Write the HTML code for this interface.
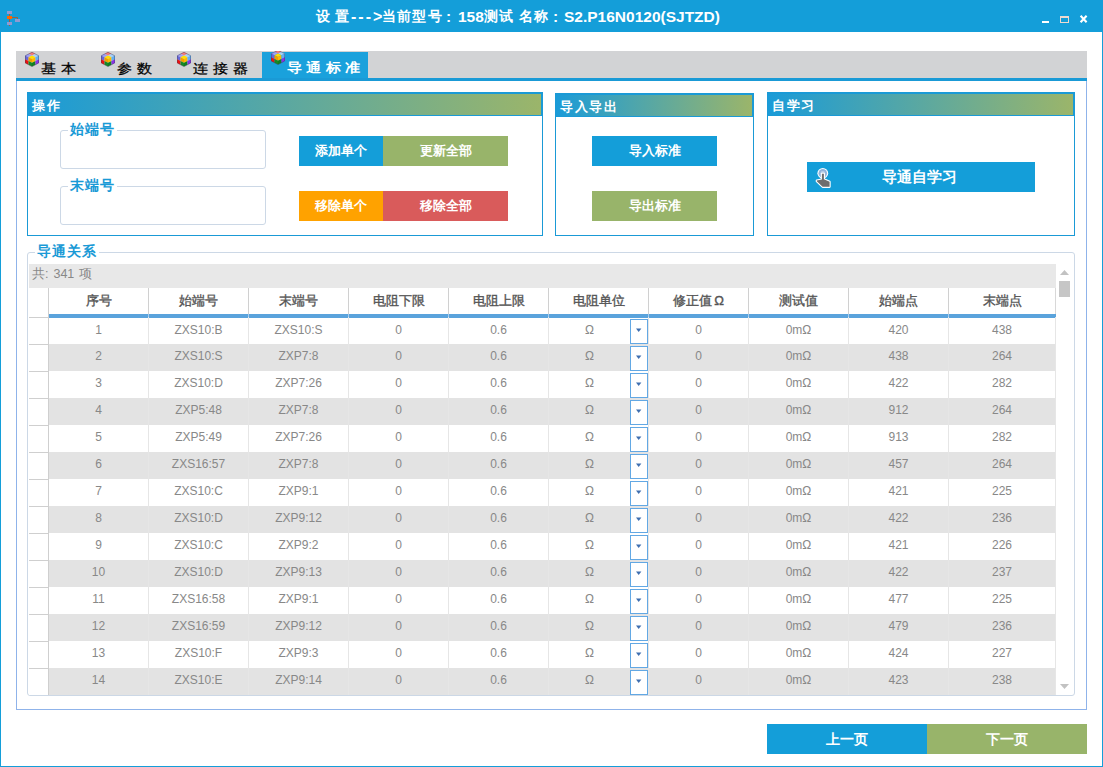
<!DOCTYPE html>
<html><head><meta charset="utf-8">
<style>
*{box-sizing:border-box;margin:0;padding:0}
html,body{width:1103px;height:767px;overflow:hidden;background:#fff;font-family:"Liberation Sans",sans-serif}
.abs{position:absolute}
#win{position:absolute;left:0;top:0;width:1103px;height:767px;border:1px solid #149ed9;border-top:none;background:#fff}
#title{position:absolute;left:0;top:0;width:1103px;height:32px;background:#149ed9}
.tt{position:absolute;color:#fff;font-weight:bold;white-space:nowrap}
.tt.c{font-size:13.5px;top:8px}
.tt.l{font-size:15.5px;top:8px}
#ttext{position:absolute;left:316px;top:7px;color:#fff;font-weight:bold;font-size:15px;white-space:nowrap;letter-spacing:0}
#frame{position:absolute;left:16px;top:78px;width:1071px;height:632px;border:1px solid #8fb3ea;border-top:none}
#tabbar{position:absolute;left:16px;top:51px;width:1071px;height:27px;background:#d2d3d5}
#tabline{position:absolute;left:16px;top:78px;width:1071px;height:3px;background:#1a9ad6}
.tab{position:absolute;top:51px;height:27px;font-size:15px;color:#000;white-space:nowrap;letter-spacing:3.8px;font-weight:500;font-size:15.5px;-webkit-text-stroke:0.3px #000}
.tab.on{background:#1aa1dc;color:#fff;font-weight:bold;-webkit-text-stroke:0}
.tab span{position:absolute;top:8.5px;transform:scaleY(0.86);transform-origin:top left}
.group{position:absolute;border:1px solid #1a9ad6;background:#fff}
.ghead{position:absolute;left:0;top:0;right:0;height:23px;background:linear-gradient(to right,#1a9bd8,#9bb56a);border-top:1px solid #1a9ad6;border-right:1px solid #1a9ad6;border-bottom:1px solid #1a9ad6;color:#fff;font-weight:bold;font-size:13px;letter-spacing:1.6px;padding-left:4px;line-height:24px}
.btn{position:absolute;color:#fff;font-weight:bold;font-size:13px;text-align:center;line-height:30px;white-space:nowrap}
.fs{position:absolute;border:1px solid #ccd8e6;border-radius:3px}
.legend{position:absolute;background:#fff;color:#1a9ad6;font-size:14px;font-weight:bold;letter-spacing:1px;padding:0 2px;white-space:nowrap}
#tbl{position:absolute;left:29px;top:288px}
.hdr{position:absolute;top:288px;height:26px;color:#555;font-weight:500;-webkit-text-stroke:0.35px #555;font-size:13px;text-align:center;line-height:26px}
.row{position:absolute;left:49px;width:1007px;height:27px}
.dd{position:absolute;width:18px;height:25px;border:1px solid #62a8e4;background:#fff}
.dd i{position:absolute;left:5.5px;top:9.5px;width:0;height:0;border-left:2.5px solid transparent;border-right:2.5px solid transparent;border-top:3.5px solid #3f6fb0}
.cell{position:absolute;top:-1px;height:28px;color:#888;font-size:12px;text-align:center;line-height:27px;border-right:1px solid #e6e6e6}
</style></head><body>
<div id="win">
  <div id="title"></div>
</div>
<div class="tt c" style="left:316px">设</div>
<div class="tt c" style="left:335px">置</div>
<div class="tt l" style="left:351px;letter-spacing:2px;font-size:16px;top:8px">---&gt;</div>
<div class="tt c" style="left:382px;letter-spacing:1.2px">当前型号</div>
<div class="tt l" style="left:446px">:</div>
<div class="tt l" style="left:458px">158</div>
<div class="tt c" style="left:484px;letter-spacing:1.2px">测试</div>
<div class="tt c" style="left:519px;letter-spacing:1.2px">名称</div>
<div class="tt l" style="left:553px">:</div>
<div class="tt l" style="left:564px">S2.P16N0120(SJTZD)</div>
<div id="frame"></div>
<div id="tabbar"></div>
<div id="tabline"></div>
<div class="tab" style="left:16px;width:86px"><span style="left:25px">基本</span></div>
<div class="tab" style="left:102px;width:76px"><span style="left:15px">参数</span></div>
<div class="tab" style="left:178px;width:84px"><span style="left:15px">连接器</span></div>
<div class="tab on" style="left:262px;width:106px;top:52px;height:26px;letter-spacing:3.3px"><span style="left:25px;top:6.5px">导通标准</span></div>

<div class="group" style="left:27px;top:92px;width:516px;height:144px"><div class="ghead">操作</div></div>
<div class="group" style="left:555px;top:93px;width:199px;height:143px"><div class="ghead">导入导出</div></div>
<div class="group" style="left:767px;top:92px;width:308px;height:144px"><div class="ghead">自学习</div></div>

<div class="fs" style="left:60px;top:130px;width:206px;height:39px"></div>
<div class="legend" style="left:68px;top:121px">始端号</div>
<div class="fs" style="left:60px;top:186px;width:206px;height:39px"></div>
<div class="legend" style="left:68px;top:177px">末端号</div>

<div class="btn" style="left:299px;top:136px;width:84px;height:30px;background:#149ed9">添加单个</div>
<div class="btn" style="left:383px;top:136px;width:125px;height:30px;background:#98b46a">更新全部</div>
<div class="btn" style="left:299px;top:191px;width:84px;height:30px;background:#ffa200">移除单个</div>
<div class="btn" style="left:383px;top:191px;width:125px;height:30px;background:#d95b5b">移除全部</div>
<div class="btn" style="left:592px;top:136px;width:125px;height:30px;background:#149ed9">导入标准</div>
<div class="btn" style="left:592px;top:191px;width:125px;height:30px;background:#98b46a">导出标准</div>
<div class="btn" style="left:807px;top:162px;width:228px;height:30px;background:#149ed9;font-size:15px;text-indent:-3px">导通自学习</div>

<div class="fs" style="left:27px;top:252px;width:1048px;height:444px"></div>
<div class="legend" style="left:35px;top:243px">导通关系</div>
<div class="abs" style="left:29px;top:264px;width:1027px;height:24px;background:#e8e8e8;color:#888;font-size:12.5px;line-height:21.5px;padding-left:3px;word-spacing:1.5px">共: 341 项</div>

<!-- TABLE -->
<div class="abs" style="left:29px;top:288px;width:19px;height:407px;background:#fff"></div>
<div class="abs" style="left:48px;top:288px;width:1px;height:407px;background:#cfcfcf"></div>
<div class="hdr" style="left:49px;width:99px">序号</div>
<div class="abs" style="left:148px;top:288px;width:1px;height:26px;background:#d0d0d0"></div>
<div class="hdr" style="left:149px;width:99px">始端号</div>
<div class="abs" style="left:248px;top:288px;width:1px;height:26px;background:#d0d0d0"></div>
<div class="hdr" style="left:249px;width:99px">末端号</div>
<div class="abs" style="left:348px;top:288px;width:1px;height:26px;background:#d0d0d0"></div>
<div class="hdr" style="left:349px;width:99px">电阻下限</div>
<div class="abs" style="left:448px;top:288px;width:1px;height:26px;background:#d0d0d0"></div>
<div class="hdr" style="left:449px;width:99px">电阻上限</div>
<div class="abs" style="left:548px;top:288px;width:1px;height:26px;background:#d0d0d0"></div>
<div class="hdr" style="left:549px;width:99px">电阻单位</div>
<div class="abs" style="left:648px;top:288px;width:1px;height:26px;background:#d0d0d0"></div>
<div class="hdr" style="left:649px;width:99px">修正值<span style="margin-left:2px">Ω</span></div>
<div class="abs" style="left:748px;top:288px;width:1px;height:26px;background:#d0d0d0"></div>
<div class="hdr" style="left:749px;width:99px">测试值</div>
<div class="abs" style="left:848px;top:288px;width:1px;height:26px;background:#d0d0d0"></div>
<div class="hdr" style="left:849px;width:99px">始端点</div>
<div class="abs" style="left:948px;top:288px;width:1px;height:26px;background:#d0d0d0"></div>
<div class="hdr" style="left:949px;width:107px">末端点</div>
<div class="abs" style="left:1055px;top:288px;width:1px;height:26px;background:#d8d8d8"></div>
<div class="abs" style="left:49px;top:314px;width:1007px;height:4px;background:#5aa3dc"></div>
<div id="notches"><div class="abs" style="left:148px;top:314px;width:1px;height:4px;background:#a8cdec"></div><div class="abs" style="left:248px;top:314px;width:1px;height:4px;background:#a8cdec"></div><div class="abs" style="left:348px;top:314px;width:1px;height:4px;background:#a8cdec"></div><div class="abs" style="left:448px;top:314px;width:1px;height:4px;background:#a8cdec"></div><div class="abs" style="left:548px;top:314px;width:1px;height:4px;background:#a8cdec"></div><div class="abs" style="left:648px;top:314px;width:1px;height:4px;background:#a8cdec"></div><div class="abs" style="left:748px;top:314px;width:1px;height:4px;background:#a8cdec"></div><div class="abs" style="left:848px;top:314px;width:1px;height:4px;background:#a8cdec"></div><div class="abs" style="left:948px;top:314px;width:1px;height:4px;background:#a8cdec"></div></div>
<div class="row" style="top:318px;height:26px;background:#fff">
<div class="cell" style="left:0px;width:100px;line-height:26px">1</div>
<div class="cell" style="left:100px;width:100px;line-height:26px">ZXS10:B</div>
<div class="cell" style="left:200px;width:100px;line-height:26px">ZXS10:S</div>
<div class="cell" style="left:300px;width:100px;line-height:26px">0</div>
<div class="cell" style="left:400px;width:100px;line-height:26px">0.6</div>
<div class="cell" style="left:500px;width:100px;line-height:26px"><span style="margin-left:-18px">Ω</span></div>
<div class="dd" style="left:581px;top:1px"><svg style="position:absolute;left:-1px;top:-1px" width="18" height="25"><polygon points="6,9.6 11.4,9.6 8.7,13" fill="#3f6fb0"/></svg></div>
<div class="cell" style="left:600px;width:100px;line-height:26px">0</div>
<div class="cell" style="left:700px;width:100px;line-height:26px">0mΩ</div>
<div class="cell" style="left:800px;width:100px;line-height:26px">420</div>
<div class="cell" style="left:900px;width:107px;line-height:26px">438</div>
</div>
<div class="abs" style="left:29px;top:317px;width:19px;height:1px;background:#cfcfcf"></div>
<div class="row" style="top:344px;height:27px;background:#e3e3e3">
<div class="cell" style="left:0px;width:100px;line-height:27px">2</div>
<div class="cell" style="left:100px;width:100px;line-height:27px">ZXS10:S</div>
<div class="cell" style="left:200px;width:100px;line-height:27px">ZXP7:8</div>
<div class="cell" style="left:300px;width:100px;line-height:27px">0</div>
<div class="cell" style="left:400px;width:100px;line-height:27px">0.6</div>
<div class="cell" style="left:500px;width:100px;line-height:27px"><span style="margin-left:-18px">Ω</span></div>
<div class="dd" style="left:581px;top:2px"><svg style="position:absolute;left:-1px;top:-1px" width="18" height="25"><polygon points="6,9.6 11.4,9.6 8.7,13" fill="#3f6fb0"/></svg></div>
<div class="cell" style="left:600px;width:100px;line-height:27px">0</div>
<div class="cell" style="left:700px;width:100px;line-height:27px">0mΩ</div>
<div class="cell" style="left:800px;width:100px;line-height:27px">438</div>
<div class="cell" style="left:900px;width:107px;line-height:27px">264</div>
</div>
<div class="abs" style="left:29px;top:344px;width:19px;height:1px;background:#cfcfcf"></div>
<div class="row" style="top:371px;height:27px;background:#fff">
<div class="cell" style="left:0px;width:100px;line-height:27px">3</div>
<div class="cell" style="left:100px;width:100px;line-height:27px">ZXS10:D</div>
<div class="cell" style="left:200px;width:100px;line-height:27px">ZXP7:26</div>
<div class="cell" style="left:300px;width:100px;line-height:27px">0</div>
<div class="cell" style="left:400px;width:100px;line-height:27px">0.6</div>
<div class="cell" style="left:500px;width:100px;line-height:27px"><span style="margin-left:-18px">Ω</span></div>
<div class="dd" style="left:581px;top:2px"><svg style="position:absolute;left:-1px;top:-1px" width="18" height="25"><polygon points="6,9.6 11.4,9.6 8.7,13" fill="#3f6fb0"/></svg></div>
<div class="cell" style="left:600px;width:100px;line-height:27px">0</div>
<div class="cell" style="left:700px;width:100px;line-height:27px">0mΩ</div>
<div class="cell" style="left:800px;width:100px;line-height:27px">422</div>
<div class="cell" style="left:900px;width:107px;line-height:27px">282</div>
</div>
<div class="abs" style="left:29px;top:371px;width:19px;height:1px;background:#cfcfcf"></div>
<div class="row" style="top:398px;height:27px;background:#e3e3e3">
<div class="cell" style="left:0px;width:100px;line-height:27px">4</div>
<div class="cell" style="left:100px;width:100px;line-height:27px">ZXP5:48</div>
<div class="cell" style="left:200px;width:100px;line-height:27px">ZXP7:8</div>
<div class="cell" style="left:300px;width:100px;line-height:27px">0</div>
<div class="cell" style="left:400px;width:100px;line-height:27px">0.6</div>
<div class="cell" style="left:500px;width:100px;line-height:27px"><span style="margin-left:-18px">Ω</span></div>
<div class="dd" style="left:581px;top:2px"><svg style="position:absolute;left:-1px;top:-1px" width="18" height="25"><polygon points="6,9.6 11.4,9.6 8.7,13" fill="#3f6fb0"/></svg></div>
<div class="cell" style="left:600px;width:100px;line-height:27px">0</div>
<div class="cell" style="left:700px;width:100px;line-height:27px">0mΩ</div>
<div class="cell" style="left:800px;width:100px;line-height:27px">912</div>
<div class="cell" style="left:900px;width:107px;line-height:27px">264</div>
</div>
<div class="abs" style="left:29px;top:398px;width:19px;height:1px;background:#cfcfcf"></div>
<div class="row" style="top:425px;height:27px;background:#fff">
<div class="cell" style="left:0px;width:100px;line-height:27px">5</div>
<div class="cell" style="left:100px;width:100px;line-height:27px">ZXP5:49</div>
<div class="cell" style="left:200px;width:100px;line-height:27px">ZXP7:26</div>
<div class="cell" style="left:300px;width:100px;line-height:27px">0</div>
<div class="cell" style="left:400px;width:100px;line-height:27px">0.6</div>
<div class="cell" style="left:500px;width:100px;line-height:27px"><span style="margin-left:-18px">Ω</span></div>
<div class="dd" style="left:581px;top:2px"><svg style="position:absolute;left:-1px;top:-1px" width="18" height="25"><polygon points="6,9.6 11.4,9.6 8.7,13" fill="#3f6fb0"/></svg></div>
<div class="cell" style="left:600px;width:100px;line-height:27px">0</div>
<div class="cell" style="left:700px;width:100px;line-height:27px">0mΩ</div>
<div class="cell" style="left:800px;width:100px;line-height:27px">913</div>
<div class="cell" style="left:900px;width:107px;line-height:27px">282</div>
</div>
<div class="abs" style="left:29px;top:425px;width:19px;height:1px;background:#cfcfcf"></div>
<div class="row" style="top:452px;height:27px;background:#e3e3e3">
<div class="cell" style="left:0px;width:100px;line-height:27px">6</div>
<div class="cell" style="left:100px;width:100px;line-height:27px">ZXS16:57</div>
<div class="cell" style="left:200px;width:100px;line-height:27px">ZXP7:8</div>
<div class="cell" style="left:300px;width:100px;line-height:27px">0</div>
<div class="cell" style="left:400px;width:100px;line-height:27px">0.6</div>
<div class="cell" style="left:500px;width:100px;line-height:27px"><span style="margin-left:-18px">Ω</span></div>
<div class="dd" style="left:581px;top:2px"><svg style="position:absolute;left:-1px;top:-1px" width="18" height="25"><polygon points="6,9.6 11.4,9.6 8.7,13" fill="#3f6fb0"/></svg></div>
<div class="cell" style="left:600px;width:100px;line-height:27px">0</div>
<div class="cell" style="left:700px;width:100px;line-height:27px">0mΩ</div>
<div class="cell" style="left:800px;width:100px;line-height:27px">457</div>
<div class="cell" style="left:900px;width:107px;line-height:27px">264</div>
</div>
<div class="abs" style="left:29px;top:452px;width:19px;height:1px;background:#cfcfcf"></div>
<div class="row" style="top:479px;height:27px;background:#fff">
<div class="cell" style="left:0px;width:100px;line-height:27px">7</div>
<div class="cell" style="left:100px;width:100px;line-height:27px">ZXS10:C</div>
<div class="cell" style="left:200px;width:100px;line-height:27px">ZXP9:1</div>
<div class="cell" style="left:300px;width:100px;line-height:27px">0</div>
<div class="cell" style="left:400px;width:100px;line-height:27px">0.6</div>
<div class="cell" style="left:500px;width:100px;line-height:27px"><span style="margin-left:-18px">Ω</span></div>
<div class="dd" style="left:581px;top:2px"><svg style="position:absolute;left:-1px;top:-1px" width="18" height="25"><polygon points="6,9.6 11.4,9.6 8.7,13" fill="#3f6fb0"/></svg></div>
<div class="cell" style="left:600px;width:100px;line-height:27px">0</div>
<div class="cell" style="left:700px;width:100px;line-height:27px">0mΩ</div>
<div class="cell" style="left:800px;width:100px;line-height:27px">421</div>
<div class="cell" style="left:900px;width:107px;line-height:27px">225</div>
</div>
<div class="abs" style="left:29px;top:479px;width:19px;height:1px;background:#cfcfcf"></div>
<div class="row" style="top:506px;height:27px;background:#e3e3e3">
<div class="cell" style="left:0px;width:100px;line-height:27px">8</div>
<div class="cell" style="left:100px;width:100px;line-height:27px">ZXS10:D</div>
<div class="cell" style="left:200px;width:100px;line-height:27px">ZXP9:12</div>
<div class="cell" style="left:300px;width:100px;line-height:27px">0</div>
<div class="cell" style="left:400px;width:100px;line-height:27px">0.6</div>
<div class="cell" style="left:500px;width:100px;line-height:27px"><span style="margin-left:-18px">Ω</span></div>
<div class="dd" style="left:581px;top:2px"><svg style="position:absolute;left:-1px;top:-1px" width="18" height="25"><polygon points="6,9.6 11.4,9.6 8.7,13" fill="#3f6fb0"/></svg></div>
<div class="cell" style="left:600px;width:100px;line-height:27px">0</div>
<div class="cell" style="left:700px;width:100px;line-height:27px">0mΩ</div>
<div class="cell" style="left:800px;width:100px;line-height:27px">422</div>
<div class="cell" style="left:900px;width:107px;line-height:27px">236</div>
</div>
<div class="abs" style="left:29px;top:506px;width:19px;height:1px;background:#cfcfcf"></div>
<div class="row" style="top:533px;height:27px;background:#fff">
<div class="cell" style="left:0px;width:100px;line-height:27px">9</div>
<div class="cell" style="left:100px;width:100px;line-height:27px">ZXS10:C</div>
<div class="cell" style="left:200px;width:100px;line-height:27px">ZXP9:2</div>
<div class="cell" style="left:300px;width:100px;line-height:27px">0</div>
<div class="cell" style="left:400px;width:100px;line-height:27px">0.6</div>
<div class="cell" style="left:500px;width:100px;line-height:27px"><span style="margin-left:-18px">Ω</span></div>
<div class="dd" style="left:581px;top:2px"><svg style="position:absolute;left:-1px;top:-1px" width="18" height="25"><polygon points="6,9.6 11.4,9.6 8.7,13" fill="#3f6fb0"/></svg></div>
<div class="cell" style="left:600px;width:100px;line-height:27px">0</div>
<div class="cell" style="left:700px;width:100px;line-height:27px">0mΩ</div>
<div class="cell" style="left:800px;width:100px;line-height:27px">421</div>
<div class="cell" style="left:900px;width:107px;line-height:27px">226</div>
</div>
<div class="abs" style="left:29px;top:533px;width:19px;height:1px;background:#cfcfcf"></div>
<div class="row" style="top:560px;height:27px;background:#e3e3e3">
<div class="cell" style="left:0px;width:100px;line-height:27px">10</div>
<div class="cell" style="left:100px;width:100px;line-height:27px">ZXS10:D</div>
<div class="cell" style="left:200px;width:100px;line-height:27px">ZXP9:13</div>
<div class="cell" style="left:300px;width:100px;line-height:27px">0</div>
<div class="cell" style="left:400px;width:100px;line-height:27px">0.6</div>
<div class="cell" style="left:500px;width:100px;line-height:27px"><span style="margin-left:-18px">Ω</span></div>
<div class="dd" style="left:581px;top:2px"><svg style="position:absolute;left:-1px;top:-1px" width="18" height="25"><polygon points="6,9.6 11.4,9.6 8.7,13" fill="#3f6fb0"/></svg></div>
<div class="cell" style="left:600px;width:100px;line-height:27px">0</div>
<div class="cell" style="left:700px;width:100px;line-height:27px">0mΩ</div>
<div class="cell" style="left:800px;width:100px;line-height:27px">422</div>
<div class="cell" style="left:900px;width:107px;line-height:27px">237</div>
</div>
<div class="abs" style="left:29px;top:560px;width:19px;height:1px;background:#cfcfcf"></div>
<div class="row" style="top:587px;height:27px;background:#fff">
<div class="cell" style="left:0px;width:100px;line-height:27px">11</div>
<div class="cell" style="left:100px;width:100px;line-height:27px">ZXS16:58</div>
<div class="cell" style="left:200px;width:100px;line-height:27px">ZXP9:1</div>
<div class="cell" style="left:300px;width:100px;line-height:27px">0</div>
<div class="cell" style="left:400px;width:100px;line-height:27px">0.6</div>
<div class="cell" style="left:500px;width:100px;line-height:27px"><span style="margin-left:-18px">Ω</span></div>
<div class="dd" style="left:581px;top:2px"><svg style="position:absolute;left:-1px;top:-1px" width="18" height="25"><polygon points="6,9.6 11.4,9.6 8.7,13" fill="#3f6fb0"/></svg></div>
<div class="cell" style="left:600px;width:100px;line-height:27px">0</div>
<div class="cell" style="left:700px;width:100px;line-height:27px">0mΩ</div>
<div class="cell" style="left:800px;width:100px;line-height:27px">477</div>
<div class="cell" style="left:900px;width:107px;line-height:27px">225</div>
</div>
<div class="abs" style="left:29px;top:587px;width:19px;height:1px;background:#cfcfcf"></div>
<div class="row" style="top:614px;height:27px;background:#e3e3e3">
<div class="cell" style="left:0px;width:100px;line-height:27px">12</div>
<div class="cell" style="left:100px;width:100px;line-height:27px">ZXS16:59</div>
<div class="cell" style="left:200px;width:100px;line-height:27px">ZXP9:12</div>
<div class="cell" style="left:300px;width:100px;line-height:27px">0</div>
<div class="cell" style="left:400px;width:100px;line-height:27px">0.6</div>
<div class="cell" style="left:500px;width:100px;line-height:27px"><span style="margin-left:-18px">Ω</span></div>
<div class="dd" style="left:581px;top:2px"><svg style="position:absolute;left:-1px;top:-1px" width="18" height="25"><polygon points="6,9.6 11.4,9.6 8.7,13" fill="#3f6fb0"/></svg></div>
<div class="cell" style="left:600px;width:100px;line-height:27px">0</div>
<div class="cell" style="left:700px;width:100px;line-height:27px">0mΩ</div>
<div class="cell" style="left:800px;width:100px;line-height:27px">479</div>
<div class="cell" style="left:900px;width:107px;line-height:27px">236</div>
</div>
<div class="abs" style="left:29px;top:614px;width:19px;height:1px;background:#cfcfcf"></div>
<div class="row" style="top:641px;height:27px;background:#fff">
<div class="cell" style="left:0px;width:100px;line-height:27px">13</div>
<div class="cell" style="left:100px;width:100px;line-height:27px">ZXS10:F</div>
<div class="cell" style="left:200px;width:100px;line-height:27px">ZXP9:3</div>
<div class="cell" style="left:300px;width:100px;line-height:27px">0</div>
<div class="cell" style="left:400px;width:100px;line-height:27px">0.6</div>
<div class="cell" style="left:500px;width:100px;line-height:27px"><span style="margin-left:-18px">Ω</span></div>
<div class="dd" style="left:581px;top:2px"><svg style="position:absolute;left:-1px;top:-1px" width="18" height="25"><polygon points="6,9.6 11.4,9.6 8.7,13" fill="#3f6fb0"/></svg></div>
<div class="cell" style="left:600px;width:100px;line-height:27px">0</div>
<div class="cell" style="left:700px;width:100px;line-height:27px">0mΩ</div>
<div class="cell" style="left:800px;width:100px;line-height:27px">424</div>
<div class="cell" style="left:900px;width:107px;line-height:27px">227</div>
</div>
<div class="abs" style="left:29px;top:641px;width:19px;height:1px;background:#cfcfcf"></div>
<div class="row" style="top:668px;height:27px;background:#e3e3e3">
<div class="cell" style="left:0px;width:100px;line-height:27px">14</div>
<div class="cell" style="left:100px;width:100px;line-height:27px">ZXS10:E</div>
<div class="cell" style="left:200px;width:100px;line-height:27px">ZXP9:14</div>
<div class="cell" style="left:300px;width:100px;line-height:27px">0</div>
<div class="cell" style="left:400px;width:100px;line-height:27px">0.6</div>
<div class="cell" style="left:500px;width:100px;line-height:27px"><span style="margin-left:-18px">Ω</span></div>
<div class="dd" style="left:581px;top:2px"><svg style="position:absolute;left:-1px;top:-1px" width="18" height="25"><polygon points="6,9.6 11.4,9.6 8.7,13" fill="#3f6fb0"/></svg></div>
<div class="cell" style="left:600px;width:100px;line-height:27px">0</div>
<div class="cell" style="left:700px;width:100px;line-height:27px">0mΩ</div>
<div class="cell" style="left:800px;width:100px;line-height:27px">423</div>
<div class="cell" style="left:900px;width:107px;line-height:27px">238</div>
</div>
<div class="abs" style="left:29px;top:668px;width:19px;height:1px;background:#cfcfcf"></div>
<!-- /TABLE -->
<div class="btn" style="left:767px;top:724px;width:160px;height:30px;background:#149ed9;font-size:14px">上一页</div>
<div class="btn" style="left:927px;top:724px;width:160px;height:30px;background:#98b46a;font-size:14px">下一页</div>

<!-- ICONS -->
<svg class="abs" style="left:6px;top:10px" width="16" height="17" viewBox="0 0 16 17">
<path d="M3.5 4 V16 M6 7.5 H11.5 V9" stroke="#a0603a" stroke-width="1" fill="none"/>
<rect x="1" y="1" width="5" height="3" fill="#8e9ad2"/>
<rect x="1" y="6" width="5" height="3" fill="#ff6600"/>
<rect x="1" y="12" width="5" height="3" fill="#8e9ad2"/>
<rect x="9" y="9" width="5" height="3" fill="#8e9ad2"/>
</svg>
<div class="abs" style="left:1042px;top:21px;width:7px;height:2px;background:#fff"></div>
<div class="abs" style="left:1060px;top:16px;width:9px;height:7px;border:1px solid #eedad0;border-top-width:2px"></div>
<svg class="abs" style="left:1079px;top:14px" width="10" height="10" viewBox="0 0 10 10"><path d="M1.6 1.8 L7.6 8.2 M7.6 1.8 L1.6 8.2" stroke="#fff" stroke-width="2.1"/></svg>
<div class="abs" style="left:25px;top:52px"><svg width="14" height="15" viewBox="0 0 14 15"><g stroke="none">
<polygon points="7,0 10.5,1.75 7,3.5 3.5,1.75" fill="#f57a7a"/>
<polygon points="3.5,1.75 7,3.5 3.5,5.25 0,3.5" fill="#a0a0f5"/>
<polygon points="10.5,1.75 14,3.5 10.5,5.25 7,3.5" fill="#a8d0f8"/>
<polygon points="7,3.5 10.5,5.25 7,7 3.5,5.25" fill="#ffe000"/>
<polygon points="0,3.5 3.5,5.25 3.5,9 0,7.25" fill="#6868d8"/>
<polygon points="3.5,5.25 7,7 7,10.75 3.5,9" fill="#f0a000"/>
<polygon points="0,7.25 3.5,9 3.5,12.75 0,11" fill="#ee1010"/>
<polygon points="3.5,9 7,10.75 7,14.5 3.5,12.75" fill="#158a25"/>
<polygon points="7,7 10.5,5.25 10.5,9 7,10.75" fill="#ffb800"/>
<polygon points="10.5,5.25 14,3.5 14,7.25 10.5,9" fill="#60b0f5"/>
<polygon points="7,10.75 10.5,9 10.5,12.75 7,14.5" fill="#108020"/>
<polygon points="10.5,9 14,7.25 14,11 10.5,12.75" fill="#8a30e8"/>
</g><polygon points="7,0.3 13.6,3.7 13.6,11 7,14.6 0.4,11 0.4,3.7" fill="none" stroke="#404058" stroke-width="0.8" stroke-opacity="0.55"/></svg></div>
<div class="abs" style="left:101px;top:52px"><svg width="14" height="15" viewBox="0 0 14 15"><g stroke="none">
<polygon points="7,0 10.5,1.75 7,3.5 3.5,1.75" fill="#f57a7a"/>
<polygon points="3.5,1.75 7,3.5 3.5,5.25 0,3.5" fill="#a0a0f5"/>
<polygon points="10.5,1.75 14,3.5 10.5,5.25 7,3.5" fill="#a8d0f8"/>
<polygon points="7,3.5 10.5,5.25 7,7 3.5,5.25" fill="#ffe000"/>
<polygon points="0,3.5 3.5,5.25 3.5,9 0,7.25" fill="#6868d8"/>
<polygon points="3.5,5.25 7,7 7,10.75 3.5,9" fill="#f0a000"/>
<polygon points="0,7.25 3.5,9 3.5,12.75 0,11" fill="#ee1010"/>
<polygon points="3.5,9 7,10.75 7,14.5 3.5,12.75" fill="#158a25"/>
<polygon points="7,7 10.5,5.25 10.5,9 7,10.75" fill="#ffb800"/>
<polygon points="10.5,5.25 14,3.5 14,7.25 10.5,9" fill="#60b0f5"/>
<polygon points="7,10.75 10.5,9 10.5,12.75 7,14.5" fill="#108020"/>
<polygon points="10.5,9 14,7.25 14,11 10.5,12.75" fill="#8a30e8"/>
</g><polygon points="7,0.3 13.6,3.7 13.6,11 7,14.6 0.4,11 0.4,3.7" fill="none" stroke="#404058" stroke-width="0.8" stroke-opacity="0.55"/></svg></div>
<div class="abs" style="left:177px;top:52px"><svg width="14" height="15" viewBox="0 0 14 15"><g stroke="none">
<polygon points="7,0 10.5,1.75 7,3.5 3.5,1.75" fill="#f57a7a"/>
<polygon points="3.5,1.75 7,3.5 3.5,5.25 0,3.5" fill="#a0a0f5"/>
<polygon points="10.5,1.75 14,3.5 10.5,5.25 7,3.5" fill="#a8d0f8"/>
<polygon points="7,3.5 10.5,5.25 7,7 3.5,5.25" fill="#ffe000"/>
<polygon points="0,3.5 3.5,5.25 3.5,9 0,7.25" fill="#6868d8"/>
<polygon points="3.5,5.25 7,7 7,10.75 3.5,9" fill="#f0a000"/>
<polygon points="0,7.25 3.5,9 3.5,12.75 0,11" fill="#ee1010"/>
<polygon points="3.5,9 7,10.75 7,14.5 3.5,12.75" fill="#158a25"/>
<polygon points="7,7 10.5,5.25 10.5,9 7,10.75" fill="#ffb800"/>
<polygon points="10.5,5.25 14,3.5 14,7.25 10.5,9" fill="#60b0f5"/>
<polygon points="7,10.75 10.5,9 10.5,12.75 7,14.5" fill="#108020"/>
<polygon points="10.5,9 14,7.25 14,11 10.5,12.75" fill="#8a30e8"/>
</g><polygon points="7,0.3 13.6,3.7 13.6,11 7,14.6 0.4,11 0.4,3.7" fill="none" stroke="#404058" stroke-width="0.8" stroke-opacity="0.55"/></svg></div>
<div class="abs" style="left:271px;top:51px;width:14px;height:14px;overflow:hidden"><div style="position:absolute;top:-1px"><svg width="14" height="15" viewBox="0 0 14 15"><g stroke="none">
<polygon points="7,0 10.5,1.75 7,3.5 3.5,1.75" fill="#f57a7a"/>
<polygon points="3.5,1.75 7,3.5 3.5,5.25 0,3.5" fill="#a0a0f5"/>
<polygon points="10.5,1.75 14,3.5 10.5,5.25 7,3.5" fill="#a8d0f8"/>
<polygon points="7,3.5 10.5,5.25 7,7 3.5,5.25" fill="#ffe000"/>
<polygon points="0,3.5 3.5,5.25 3.5,9 0,7.25" fill="#6868d8"/>
<polygon points="3.5,5.25 7,7 7,10.75 3.5,9" fill="#f0a000"/>
<polygon points="0,7.25 3.5,9 3.5,12.75 0,11" fill="#ee1010"/>
<polygon points="3.5,9 7,10.75 7,14.5 3.5,12.75" fill="#158a25"/>
<polygon points="7,7 10.5,5.25 10.5,9 7,10.75" fill="#ffb800"/>
<polygon points="10.5,5.25 14,3.5 14,7.25 10.5,9" fill="#60b0f5"/>
<polygon points="7,10.75 10.5,9 10.5,12.75 7,14.5" fill="#108020"/>
<polygon points="10.5,9 14,7.25 14,11 10.5,12.75" fill="#8a30e8"/>
</g><polygon points="7,0.3 13.6,3.7 13.6,11 7,14.6 0.4,11 0.4,3.7" fill="none" stroke="#404058" stroke-width="0.8" stroke-opacity="0.55"/></svg></div></div>
<svg class="abs" style="left:813px;top:167px" width="20" height="22" viewBox="0 0 20 22">
<circle cx="9.8" cy="6.3" r="5.4" fill="#fff"/>
<circle cx="9.8" cy="6.3" r="4.3" fill="#93b4dc"/>
<circle cx="9.8" cy="6.3" r="2.3" fill="#bcd0e8"/>
<path d="M8.9 6.8 H10.9 V12.2 L16.6 14.8 V19.8 H9.6 L3.8 14.3 V13.6 L8.9 12.6 Z" fill="#6e6e6e" stroke="#fff" stroke-width="2.2" stroke-linejoin="round" paint-order="stroke"/>
</svg>
<svg class="abs" style="left:1059px;top:269px" width="11" height="7" viewBox="0 0 11 7"><polygon points="1,6 5.5,1 10,6" fill="#c2c2c2"/></svg>
<div class="abs" style="left:1059px;top:281px;width:11px;height:16px;background:#c6c6c6"></div>
<svg class="abs" style="left:1059px;top:683px" width="11" height="7" viewBox="0 0 11 7"><polygon points="1,1 10,1 5.5,6" fill="#c2c2c2"/></svg>
<!-- /ICONS -->
</body></html>
